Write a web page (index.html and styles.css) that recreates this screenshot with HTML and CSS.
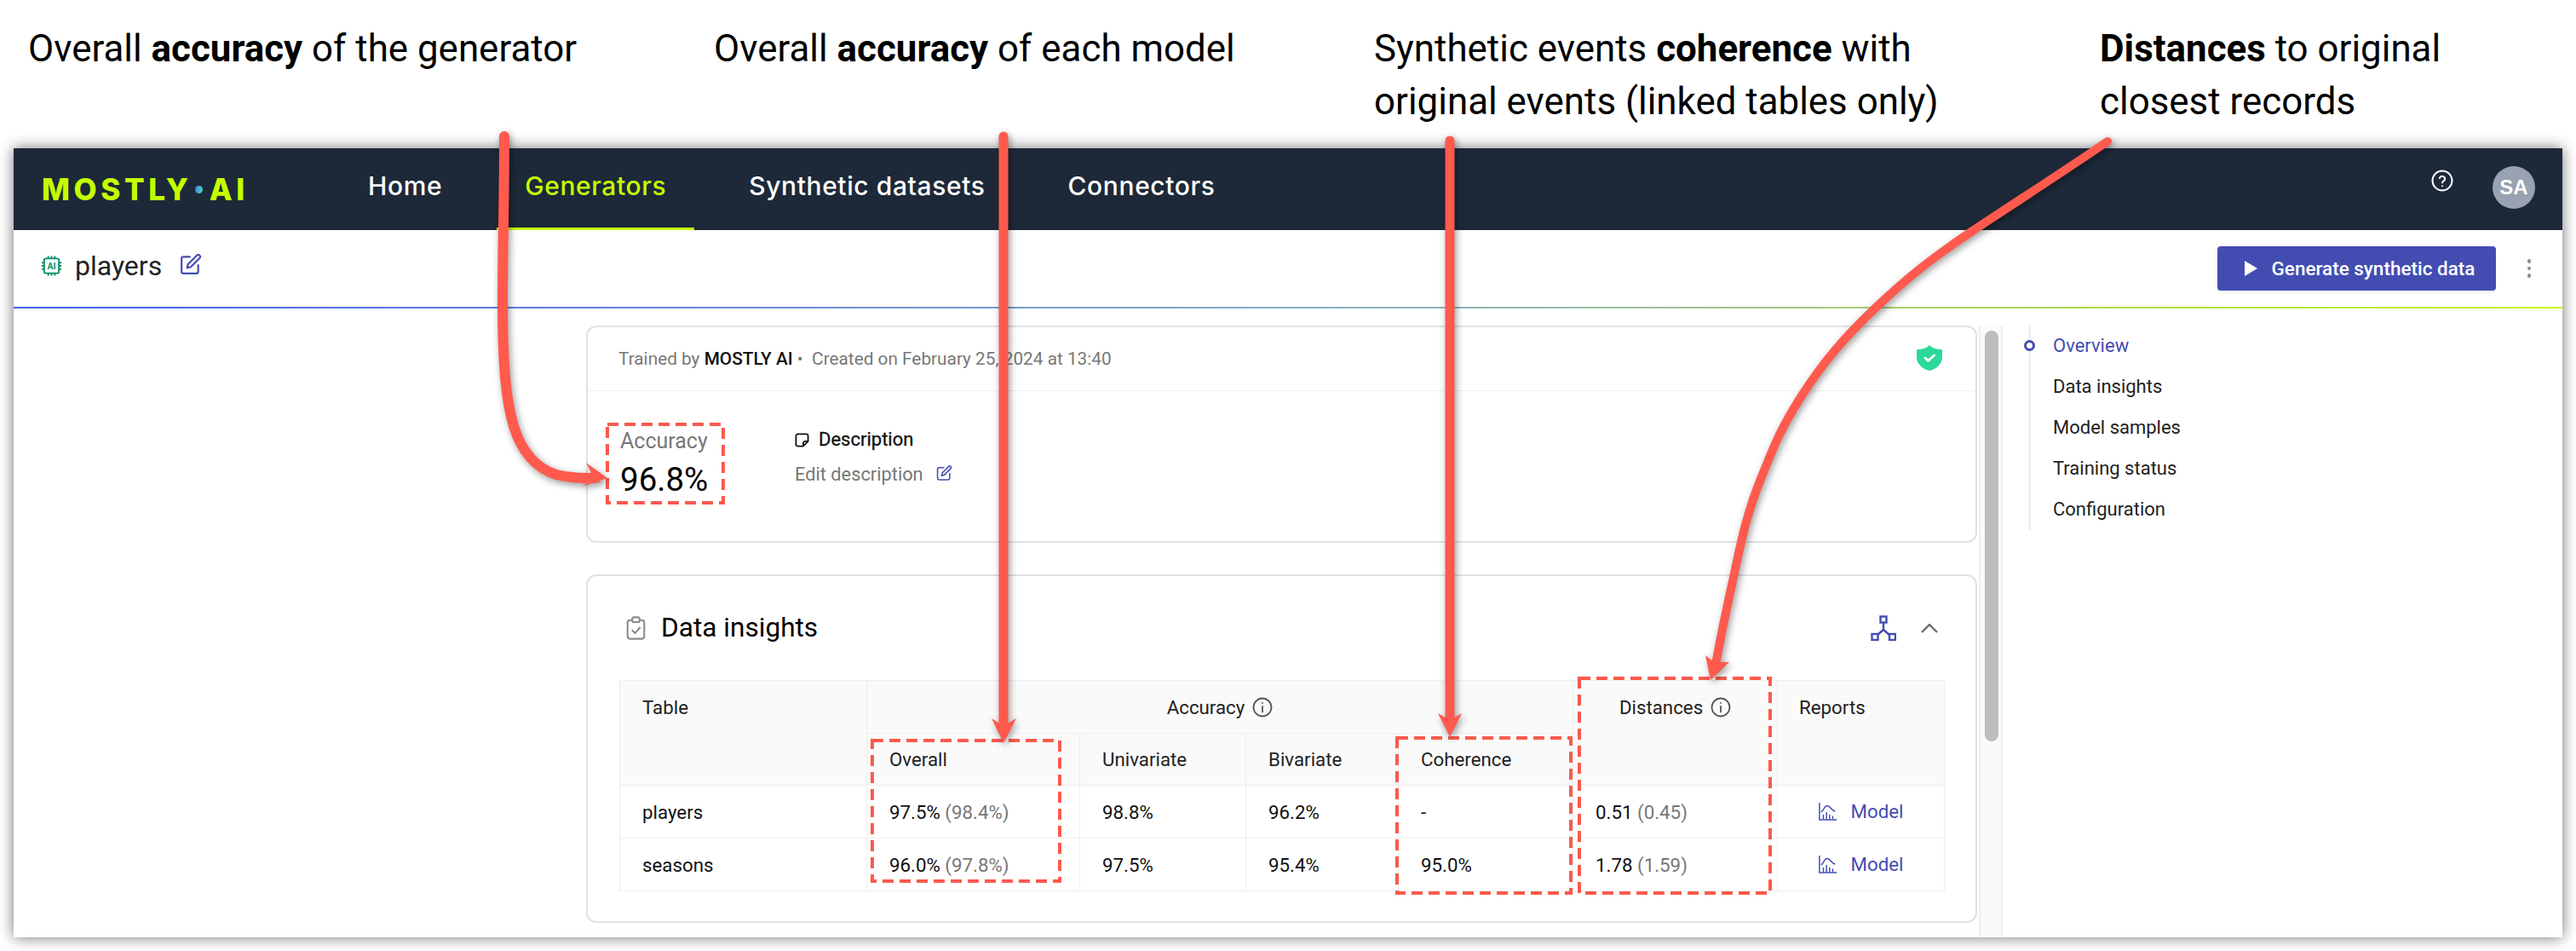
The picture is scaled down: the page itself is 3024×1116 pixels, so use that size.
FILE: index.html
```html
<!doctype html>
<html lang="en">
<head>
	<meta charset="UTF-8">
	<title>Generator players</title>
	<link rel="stylesheet" href="styles.css">
</head>
<body>
	<div class="captions">
		<p class="cap cap1">Overall <b>accuracy</b> of the generator</p>
		<p class="cap cap2">Overall <b>accuracy</b> of each model</p>
		<p class="cap cap3">Synthetic events <b>coherence</b> with<br>original events (linked tables only)</p>
		<p class="cap cap4"><b>Distances</b> to original<br>closest records</p>
	</div>

	<div class="app">
		<nav class="topnav">
			<a class="logo">MOSTLY<i class="logo-dot"></i>AI</a>
			<ul class="tabs">
				<li>Home</li>
				<li class="on">Generators</li>
				<li>Synthetic datasets</li>
				<li>Connectors</li>
			</ul>
			<div class="nav-right">
				<svg class="help" viewBox="0 0 26 26" fill="none" stroke="#fff" stroke-width="2" stroke-linecap="round"><circle cx="13" cy="13" r="11.5"/><path d="M9.8 10a3.3 3.3 0 0 1 6.4 1c0 2.2-3.2 2.6-3.2 4.4"/><path d="M13 19.2v.1"/></svg>
				<span class="avatar">SA</span>
			</div>
		</nav>

		<div class="subhead">
			<div class="subhead-title">
				<svg class="chip" viewBox="0 0 24 24" fill="none" stroke="#0b8f6b" stroke-width="2"><rect x="3" y="3" width="18" height="18" rx="2"/><path d="M8 0v3M12 0v3M16 0v3M8 21v3M12 21v3M16 21v3M0 8h3M0 12h3M0 16h3M21 8h3M21 12h3M21 16h3"/><text x="12" y="16.5" text-anchor="middle" class="chip-text">AI</text></svg>
				<span class="name">players</span>
				<svg class="edit" viewBox="0 0 24 24" fill="none" stroke="#434db1" stroke-width="2" stroke-linecap="round" stroke-linejoin="round"><path d="M11 4H4a2 2 0 0 0-2 2v14a2 2 0 0 0 2 2h14a2 2 0 0 0 2-2v-7"/><path d="M18.5 2.5a2.12 2.12 0 0 1 3 3L12 15l-4 1 1-4z"/></svg>
			</div>
			<div class="subhead-actions">
				<button class="btn"><svg class="play" viewBox="0 0 15 18"><path d="M0 0l15 9-15 9z" fill="#fff"/></svg>Generate synthetic data</button>
				<span class="dots"><i></i><i></i><i></i></span>
			</div>
		</div>

		<div class="main">
			<div class="content">
				<section class="card card-top">
					<div class="card-meta">
						<span>Trained by <b>MOSTLY AI</b> • &nbsp;Created on February 25, 2024 at 13:40</span>
						<svg class="shield" viewBox="0 0 30 30"><path d="M15 0l3 2.5c2.500 1.500 6 2.300 10.500 2.500 1 .1 1.500.6 1.500 1.500V14c0 7.500-6 14-15 16C6 28 0 21.500 0 14V6.500c0-.9.500-1.400 1.500-1.500C6 4.800 9.500 4 12 2.500z" fill="#2bd999"/><path d="M10 15l3.500 3.500L20.500 12" fill="none" stroke="#fff" stroke-width="3" stroke-linecap="round" stroke-linejoin="round"/></svg>
					</div>
					<div class="card-body">
						<div class="stat">
							<div class="stat-label">Accuracy</div>
							<div class="stat-value">96.8%</div>
						</div>
						<div class="desc">
							<div class="desc-title"><svg class="note" viewBox="0 0 24 24" fill="none" stroke="#111" stroke-width="2.600" stroke-linejoin="round"><path d="M5 2h14a3 3 0 0 1 3 3v9l-8 8H5a3 3 0 0 1-3-3V5a3 3 0 0 1 3-3z"/><path d="M14 22v-5a3 3 0 0 1 3-3h5"/></svg>Description</div>
							<div class="desc-edit">Edit description<svg class="edit edit-sm" viewBox="0 0 24 24" fill="none" stroke="#434db1" stroke-width="2" stroke-linecap="round" stroke-linejoin="round"><path d="M11 4H4a2 2 0 0 0-2 2v14a2 2 0 0 0 2 2h14a2 2 0 0 0 2-2v-7"/><path d="M18.5 2.5a2.12 2.12 0 0 1 3 3L12 15l-4 1 1-4z"/></svg></div>
						</div>
					</div>
				</section>

				<section class="card card-insights">
					<div class="insights-head">
						<h2><svg class="clip" viewBox="0 0 24 30" fill="none" stroke="#8a8a8a" stroke-width="2.200" stroke-linejoin="round"><rect x="1.500" y="5" width="21" height="23.500" rx="3"/><rect x="7.500" y="1.500" width="9" height="6" rx="2" fill="#fff"/><path d="M7.500 18l3.500 3.500 6-7" stroke-linecap="round"/></svg>Data insights</h2>
						<div class="insights-actions">
							<svg class="net" viewBox="0 0 30 30" fill="none" stroke="#434db1" stroke-width="2.400"><rect x="11.500" y="1.500" width="7" height="7"/><rect x="1.500" y="22" width="7" height="7"/><rect x="22" y="22" width="7" height="7"/><path d="M15 8.500V17M15 17l-7 6M15 17l7 6"/></svg>
							<svg class="chev" viewBox="0 0 20 11" fill="none" stroke="#6b6b6b" stroke-width="2.400"><path d="M1 10l9-9 9 9"/></svg>
						</div>
					</div>
					<table class="tbl">
						<colgroup>
							<col class="w1"><col class="w2"><col class="w3"><col class="w4"><col class="w5"><col class="w6"><col class="w7">
						</colgroup>
						<thead>
							<tr class="r1">
								<th rowspan="2">Table</th>
								<th colspan="4" class="mid"><span class="th-i">Accuracy<svg class="info" viewBox="0 0 24 24" fill="none" stroke="#555" stroke-width="1.800" stroke-linecap="round"><circle cx="12" cy="12" r="10.500"/><path d="M12 11v6.500M12 7v.1"/></svg></span></th>
								<th rowspan="2" class="mid"><span class="th-i">Distances<svg class="info" viewBox="0 0 24 24" fill="none" stroke="#555" stroke-width="1.800" stroke-linecap="round"><circle cx="12" cy="12" r="10.500"/><path d="M12 11v6.500M12 7v.1"/></svg></span></th>
								<th rowspan="2">Reports</th>
							</tr>
							<tr class="r2">
								<th>Overall</th>
								<th>Univariate</th>
								<th>Bivariate</th>
								<th>Coherence</th>
							</tr>
						</thead>
						<tbody>
							<tr>
								<td>players</td>
								<td>97.5% <em>(98.4%)</em></td>
								<td>98.8%</td>
								<td>96.2%</td>
								<td>-</td>
								<td>0.51 <em>(0.45)</em></td>
								<td class="mid"><a class="model"><svg class="chart" viewBox="0 0 24 24" fill="none" stroke="#434db1" stroke-width="1.600"><path d="M1 1v22h22"/><path d="M3 13c3-1 4-8 8-8s5 6 10 7"/><path d="M6 22v-6M10 22v-9M14 22v-6M18 22v-4"/></svg>Model</a></td>
							</tr>
							<tr>
								<td>seasons</td>
								<td>96.0% <em>(97.8%)</em></td>
								<td>97.5%</td>
								<td>95.4%</td>
								<td>95.0%</td>
								<td>1.78 <em>(1.59)</em></td>
								<td class="mid"><a class="model"><svg class="chart" viewBox="0 0 24 24" fill="none" stroke="#434db1" stroke-width="1.600"><path d="M1 1v22h22"/><path d="M3 13c3-1 4-8 8-8s5 6 10 7"/><path d="M6 22v-6M10 22v-9M14 22v-6M18 22v-4"/></svg>Model</a></td>
							</tr>
						</tbody>
					</table>
				</section>
			</div>

			<div class="track"><div class="thumb"></div></div>

			<aside class="side">
				<ul class="side-list">
					<li class="on">Overview</li>
					<li>Data insights</li>
					<li>Model samples</li>
					<li>Training status</li>
					<li>Configuration</li>
				</ul>
			</aside>
		</div>
	</div>

	<!-- red annotations drawn over the screenshot -->
	<svg class="marks" viewBox="0 0 3024 1116" fill="none">
		<g class="boxes">
			<rect x="713" y="498" width="136" height="92"/>
			<rect x="1024" y="869" width="220" height="165"/>
			<rect x="1640" y="866" width="204" height="182"/>
			<rect x="1854" y="796" width="224" height="252"/>
		</g>
		<g class="arrows">
			<path class="line line-wide" d="M592 160C592 230 590 300 590 350C590 430 594 470 603 500C612 530 630 550 653 557C670 561 680 561 700 561"/>
			<path class="head" d="M713 561L688 543L697 561L683 571z"/>
			<path class="line" d="M1178 160V852"/>
			<path class="head" d="M1178 872L1164 843L1178 852L1193 843z"/>
			<path class="line" d="M1702 165V845"/>
			<path class="head" d="M1702 865L1688 837L1702 845L1716 837z"/>
			<path class="line line-thin" d="M2474 166C2420 203 2365 238 2317 270S2240 325 2203 360S2140 425 2114 466S2082 525 2067 562S2045 630 2037 668S2024 725 2014 780"/>
			<path class="head" d="M2008 798L2002 769L2012 777L2030 777z"/>
		</g>
	</svg>
</body>
</html>
```

FILE: styles.css
```css
html,body{margin:0;padding:0;height:1116px;overflow:hidden;background:#fff;}
body{position:relative;font-family:Roboto,"Liberation Sans",sans-serif;color:#222;}
ul{list-style:none;margin:0;padding:0;}
p,h2{margin:0;}
svg{display:block;flex:none;}

/* captions above the window */
.captions{height:174px;position:relative;font-size:43.900px;line-height:62px;color:#000;}
.cap{position:absolute;top:26px;white-space:nowrap;}
.cap b{font-weight:700;}
.cap1{left:33px;}
.cap2{left:838px;}
.cap3{left:1613px;}
.cap4{left:2465px;}

/* window */
.app{margin:0 16px;width:2992px;height:926px;background:#fff;box-shadow:0 0 16px rgba(0,0,0,.55);overflow:hidden;}

.topnav{height:96px;background:#1d2939;display:flex;align-items:stretch;padding:0 32px 0 33px;box-sizing:border-box;}
.logo{width:350px;display:flex;align-items:center;font-family:Inter,sans-serif;font-weight:800;font-size:35px;letter-spacing:4.600px;color:#c4ff00;}
.logo-dot{width:9px;height:9px;border-radius:50%;margin:0 8px 0 3px;background:linear-gradient(90deg,#4f7cf5,#3fe0a0);}
.tabs{display:flex;gap:31px;font-family:Inter,sans-serif;font-weight:500;font-size:30px;letter-spacing:.6px;color:#fff;}
.tabs li{display:flex;align-items:center;padding:0 33px 6px;border-bottom:3px solid transparent;box-sizing:border-box;height:96px;}
.tabs li.on{color:#c4ff00;border-bottom-color:#c4ff00;}
.nav-right{margin-left:auto;display:flex;align-items:center;gap:46px;}
.help{width:26px;height:26px;margin-bottom:20px;}
.avatar{width:50px;height:50px;border-radius:50%;background:#98a2b3;color:#fff;font:700 24px "Liberation Sans",sans-serif;display:flex;align-items:center;justify-content:center;margin-bottom:4px;}

.subhead{height:90px;display:flex;align-items:center;justify-content:space-between;padding:0 37px 0 33px;box-sizing:border-box;}
.subhead-title{display:flex;align-items:center;margin-bottom:6px;}
.chip{width:23px;height:24px;margin-right:16px;}
.chip-text{font:700 11px Roboto,sans-serif;fill:#0b8f6b;stroke:none;}
.name{font-size:32px;color:#222;}
.edit{width:26px;height:26px;margin:-4px 0 0 21px;}
.subhead-actions{display:flex;align-items:center;}
.btn{width:327px;height:52px;border:0;border-radius:4px;background:#434db1;color:#fff;font:500 22.500px Roboto,sans-serif;display:flex;align-items:center;padding:0 0 0 32px;box-shadow:0 2px 3px #eee;}
.play{width:15px;height:18px;margin-right:17px;}
.dots{display:flex;flex-direction:column;gap:4px;margin-left:37px;}
.dots i{width:4.500px;height:4.500px;border-radius:50%;background:#8c8c8c;}

.main{display:flex;height:740px;border-top:2px solid;border-image:linear-gradient(90deg,#3f5ff5,#8fb4c0 55%,#c6f500) 1;}

.content{width:2307px;box-sizing:border-box;padding:20px 2px 0 672px;}
.card{border:2px solid #e2e2e2;border-radius:12px;box-sizing:border-box;background:#fff;}
.card-top{height:255px;}
.card-meta{height:75px;box-sizing:border-box;padding:0 39px 0 36px;display:flex;align-items:center;justify-content:space-between;border-bottom:1px solid #eee;font-size:20.800px;color:#777;}
.card-meta b{font-weight:500;color:#111;}
.shield{width:30px;height:30px;margin-top:-2px;}
.card-body{display:flex;padding:44px 0 0 38px;}
.stat{width:206px;}
.stat-label{font-size:25px;line-height:30px;color:#777;}
.stat-value{font-size:38.500px;line-height:46px;margin-top:7px;color:#000;}
.desc{margin-top:-2px;margin-left:-1px;}
.desc-title{display:flex;align-items:center;font-size:22px;font-weight:400;-webkit-text-stroke:.3px #111;line-height:30px;color:#111;}
.note{width:17px;height:17px;margin-right:11px;}
.desc-edit{display:flex;align-items:center;font-size:21.800px;line-height:30px;color:#777;margin-top:11px;}
.edit-sm{width:19px;height:20px;margin:-4px 0 0 15px;}

.card-insights{height:409px;margin-top:37px;padding:0 37px;}
.insights-head{height:122px;box-sizing:border-box;padding-top:41px;display:flex;justify-content:space-between;align-items:flex-start;}
.insights-head h2{display:flex;align-items:center;font-size:31.600px;line-height:40px;font-weight:400;color:#000;}
.clip{width:23px;height:28px;margin:0 18px 0 8px;}
.insights-actions{display:flex;margin-right:7px;}
.net{width:30px;height:30px;margin-top:5px;}
.chev{width:20px;height:11px;margin:15px 0 0 29px;}

.tbl{width:1555px;table-layout:fixed;border-collapse:collapse;font-size:22.300px;color:#111;}
.w1{width:290px;}
.w2{width:250px;}
.w3{width:195px;}
.w4{width:179px;}
.w5{width:205px;}
.w6{width:240px;}
.w7{width:196px;}
.tbl th,.tbl td{border:1px solid #eee;padding:0 26px;text-align:left;box-sizing:border-box;}
.tbl td{padding-top:1px;}
.tbl th{background:#fafafa;font-weight:400;color:#222;}
.tbl th[rowspan],.r1 th{vertical-align:top;padding-top:16px;line-height:30px;}
.tbl th[rowspan]:last-child{padding-left:25px;}
.r1{height:62px;}
.r2{height:61px;}
.tbl tbody tr{height:62px;}
.tbl .mid{text-align:center;}
.th-i{display:inline-flex;align-items:center;gap:9px;}
.info{width:24px;height:24px;}
.tbl em{font-style:normal;color:#777;}
.model{display:inline-flex;align-items:center;gap:16px;color:#434db1;}
.chart{width:22px;height:22px;}

.track{width:28px;margin-top:20px;padding-top:6px;box-sizing:border-box;background:#fafafa;border:solid #eee;border-width:0 2px;}
.thumb{width:16px;height:482px;margin-left:5px;border-radius:8px;background:#bdbdbd;}

.side{padding:20px 0 0 30px;}
.side-list{border-left:3px solid #f0f0f0;height:240px;}
.side-list li{position:relative;height:48px;line-height:48px;padding-left:26px;font-size:22px;color:#222;}
.side-list li.on{color:#434db1;}
.side-list li.on:before{content:"";position:absolute;left:-8px;top:17px;width:7px;height:7px;border:3px solid #434db1;border-radius:50%;background:#fff;}

/* annotation overlay */
.marks{position:absolute;left:0;top:0;width:3024px;height:1116px;pointer-events:none;}
.boxes rect{stroke:#fb5a4d;stroke-width:4;stroke-dasharray:13 7;}
.arrows{filter:drop-shadow(2px 3px 4px rgba(0,0,0,.4));}
.line{stroke:#ff5a4d;stroke-width:11;stroke-linecap:round;}
.line-wide{stroke-width:12;}
.line-thin{stroke-width:10;}
.head{fill:#ff5a4d;}
```
